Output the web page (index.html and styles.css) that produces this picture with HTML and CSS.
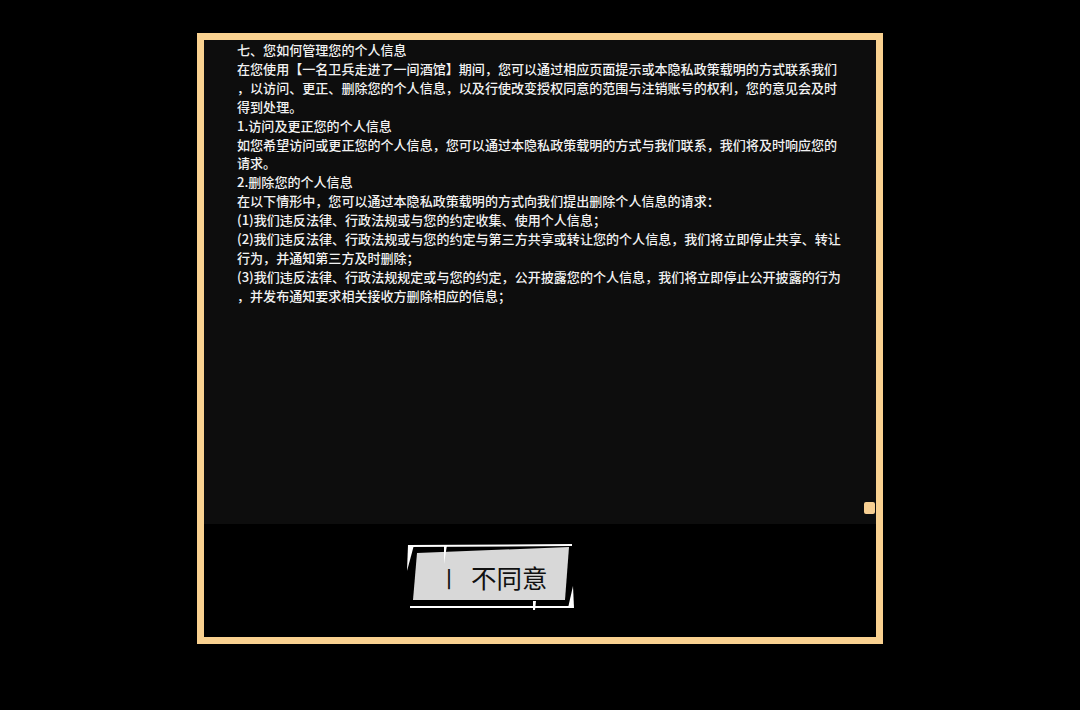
FILE: index.html
```html
<!DOCTYPE html>
<html lang="zh">
<head>
<meta charset="utf-8">
<title>隐私政策</title>
<link rel="stylesheet" href="styles.css">
</head>
<body>
<div class="frame">
  <div class="panel">
    <div class="text">
      <div class="line">七、您如何管理您的个人信息</div>
      <div class="line">在您使用【一名卫兵走进了一间酒馆】期间，您可以通过相应页面提示或本隐私政策载明的方式联系我们</div>
      <div class="line">，以访问、更正、删除您的个人信息，以及行使改变授权同意的范围与注销账号的权利，您的意见会及时</div>
      <div class="line">得到处理。</div>
      <div class="line">1.访问及更正您的个人信息</div>
      <div class="line">如您希望访问或更正您的个人信息，您可以通过本隐私政策载明的方式与我们联系，我们将及时响应您的</div>
      <div class="line">请求。</div>
      <div class="line">2.删除您的个人信息</div>
      <div class="line">在以下情形中，您可以通过本隐私政策载明的方式向我们提出删除个人信息的请求：</div>
      <div class="line">(1)我们违反法律、行政法规或与您的约定收集、使用个人信息；</div>
      <div class="line">(2)我们违反法律、行政法规或与您的约定与第三方共享或转让您的个人信息，我们将立即停止共享、转让</div>
      <div class="line">行为，并通知第三方及时删除；</div>
      <div class="line">(3)我们违反法律、行政法规规定或与您的约定，公开披露您的个人信息，我们将立即停止公开披露的行为</div>
      <div class="line">，并发布通知要求相关接收方删除相应的信息；</div>
    </div>
    <div class="thumb"></div>
  </div>
  <div class="footer">
    <div class="btn">
      <svg class="btn-bg" width="170" height="68" viewBox="0 0 170 68">
        <polygon points="12,10 164,4 160,57 8,57" fill="#d8d8d8"/>
        <line x1="3" y1="3" x2="167" y2="2" stroke="#ffffff" stroke-width="2"/>
        <polygon points="3,2 9,2 2,28" fill="#ffffff"/>
        <polygon points="39,2 42,2 39,21" fill="#ffffff"/>
        <line x1="5" y1="64" x2="167" y2="64" stroke="#ffffff" stroke-width="2"/>
        <polygon points="168,43 169,65 163,65" fill="#ffffff"/>
        <polygon points="128,58 131,58 130,67 128,67" fill="#ffffff"/>
      </svg>
      <div class="btn-label"><span class="bar">丨</span><span class="word">不同意</span></div>
    </div>
  </div>
</div>
</body>
</html>
```

FILE: styles.css
```css
html, body {
  margin: 0;
  padding: 0;
  background: #000;
}
body {
  width: 1080px;
  height: 710px;
  overflow: hidden;
  font-family: "Noto Sans CJK SC", "Noto Sans", sans-serif;
}
.frame {
  box-sizing: border-box;
  width: 686px;
  height: 611px;
  margin: 33px 0 0 197px;
  border: 7px solid #f9d190;
  display: flex;
  flex-direction: column;
  background: #000;
}
.panel {
  position: relative;
  height: 484px;
  background: #0d0d0d;
}
.text {
  padding: 1px 0 0 33px;
  color: #f2f2f2;
  font-size: 13.05px;
  font-weight: 500;
  line-height: 18.9px;
}
.line {
  white-space: nowrap;
}
.thumb {
  position: absolute;
  right: 1px;
  top: 462px;
  width: 11px;
  height: 12px;
  border-radius: 2px;
  background: #f7cf92;
}
.footer {
  flex: 1;
  display: flex;
  align-items: flex-start;
  padding: 19px 0 0 201px;
}
.btn {
  position: relative;
  width: 170px;
  height: 68px;
}
.btn-bg {
  position: absolute;
  left: 0;
  top: 0;
}
.btn-label {
  position: relative;
  display: flex;
  align-items: center;
  height: 68px;
  padding-left: 33px;
  color: #111;
  font-size: 25.5px;
  line-height: 1;
}
.bar {
  font-size: 22px;
  margin-right: 11px;
}
```
